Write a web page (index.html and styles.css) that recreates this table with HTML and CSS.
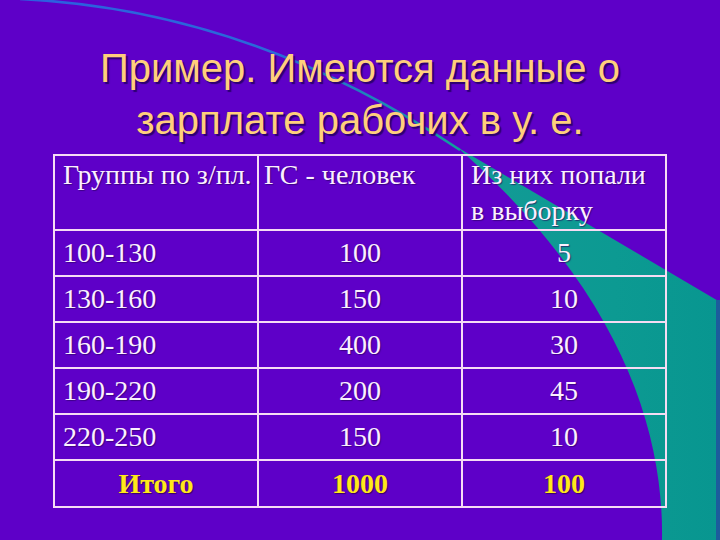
FILE: index.html
```html
<!DOCTYPE html>
<html lang="ru">
<head>
<meta charset="utf-8">
<title>Пример</title>
<link rel="stylesheet" href="styles.css">
</head>
<body>
<div class="slide">
  <svg class="decor" width="720" height="540" viewBox="0 0 720 540" xmlns="http://www.w3.org/2000/svg">
    <defs>
      <linearGradient id="tealg" x1="0" y1="0" x2="1" y2="0">
        <stop offset="0" stop-color="#139a96"/>
        <stop offset="0.6" stop-color="#0c9a92"/>
        <stop offset="1" stop-color="#089690"/>
      </linearGradient>
      <linearGradient id="lineg" x1="0" y1="0" x2="1" y2="0">
        <stop offset="0" stop-color="#2c5ee0"/>
        <stop offset="0.6" stop-color="#2a6ad8"/>
        <stop offset="1" stop-color="#10a09a"/>
      </linearGradient>
    </defs>
    <path d="M 20 -1 Q 250 10 460 150" fill="none" stroke="url(#lineg)" stroke-width="2.5"/>
    <path d="M 457 147 L 720 302 L 720 540 L 662 540 C 664 430 620 290 457 147 Z" fill="url(#tealg)"/>
    <rect x="716" y="300" width="4" height="240" fill="#1c5c9c"/>
  </svg>
  <div class="content">
    <h1 class="title">Пример. Имеются данные о<br>зарплате рабочих в у. е.</h1>
    <table class="data">
      <colgroup><col class="c"><col class="c"><col class="c"></colgroup>
      <tr class="head">
        <td class="left nowrap">Группы по з/пл.</td>
        <td class="left mid">ГС - человек</td>
        <td class="left">Из них попали в выборку</td>
      </tr>
      <tr><td class="left">100-130</td><td>100</td><td>5</td></tr>
      <tr><td class="left">130-160</td><td>150</td><td>10</td></tr>
      <tr><td class="left">160-190</td><td>400</td><td>30</td></tr>
      <tr><td class="left">190-220</td><td>200</td><td>45</td></tr>
      <tr><td class="left">220-250</td><td>150</td><td>10</td></tr>
      <tr class="total"><td>Итого</td><td>1000</td><td>100</td></tr>
    </table>
  </div>
</div>
</body>
</html>
```
FILE: styles.css
```css
html, body {
  margin: 0;
  padding: 0;
}
body {
  width: 720px;
  height: 540px;
  overflow: hidden;
  background: #5e00c8;
}
.slide {
  position: relative;
  width: 720px;
  height: 540px;
  background: #5e00c8;
}
.decor {
  position: absolute;
  left: 0;
  top: 0;
  z-index: 0;
}
.content {
  position: relative;
  z-index: 1;
  padding-top: 42px;
}
.title {
  margin: 0;
  font-family: "Liberation Sans", Arial, sans-serif;
  font-weight: normal;
  font-size: 40px;
  line-height: 52px;
  text-align: center;
  color: #ffcf7c;
  text-shadow: 2px 2px 1px #2c0070;
}
.data {
  margin: 8px 0 0 53px;
  width: 612px;
  border-collapse: collapse;
  table-layout: fixed;
  font-family: "Liberation Serif", "Times New Roman", serif;
  font-size: 28px;
  color: #fbf0ff;
}
.data .c {
  width: 204px;
}
.data td {
  border: 2px solid #f6dcf4;
  height: 44px;
  padding: 0 6px;
  text-align: center;
  vertical-align: middle;
  line-height: 36px;
  white-space: nowrap;
  text-shadow: 1px 1px 1px rgba(40, 0, 90, 0.6);
}
.data td.left {
  text-align: left;
  padding: 0 4px 0 8px;
}
.data tr.head td {
  height: 70px;
  vertical-align: top;
  padding-top: 1px;
  white-space: normal;
}
.data tr.head td.nowrap {
  white-space: nowrap;
}
.data tr.head td.mid {
  padding-left: 5px;
}
.data tr.total td {
  height: 45px;
  font-weight: bold;
  color: #ffe81a;
  text-shadow: 1px 1px 1px #3a0060;
}
```
